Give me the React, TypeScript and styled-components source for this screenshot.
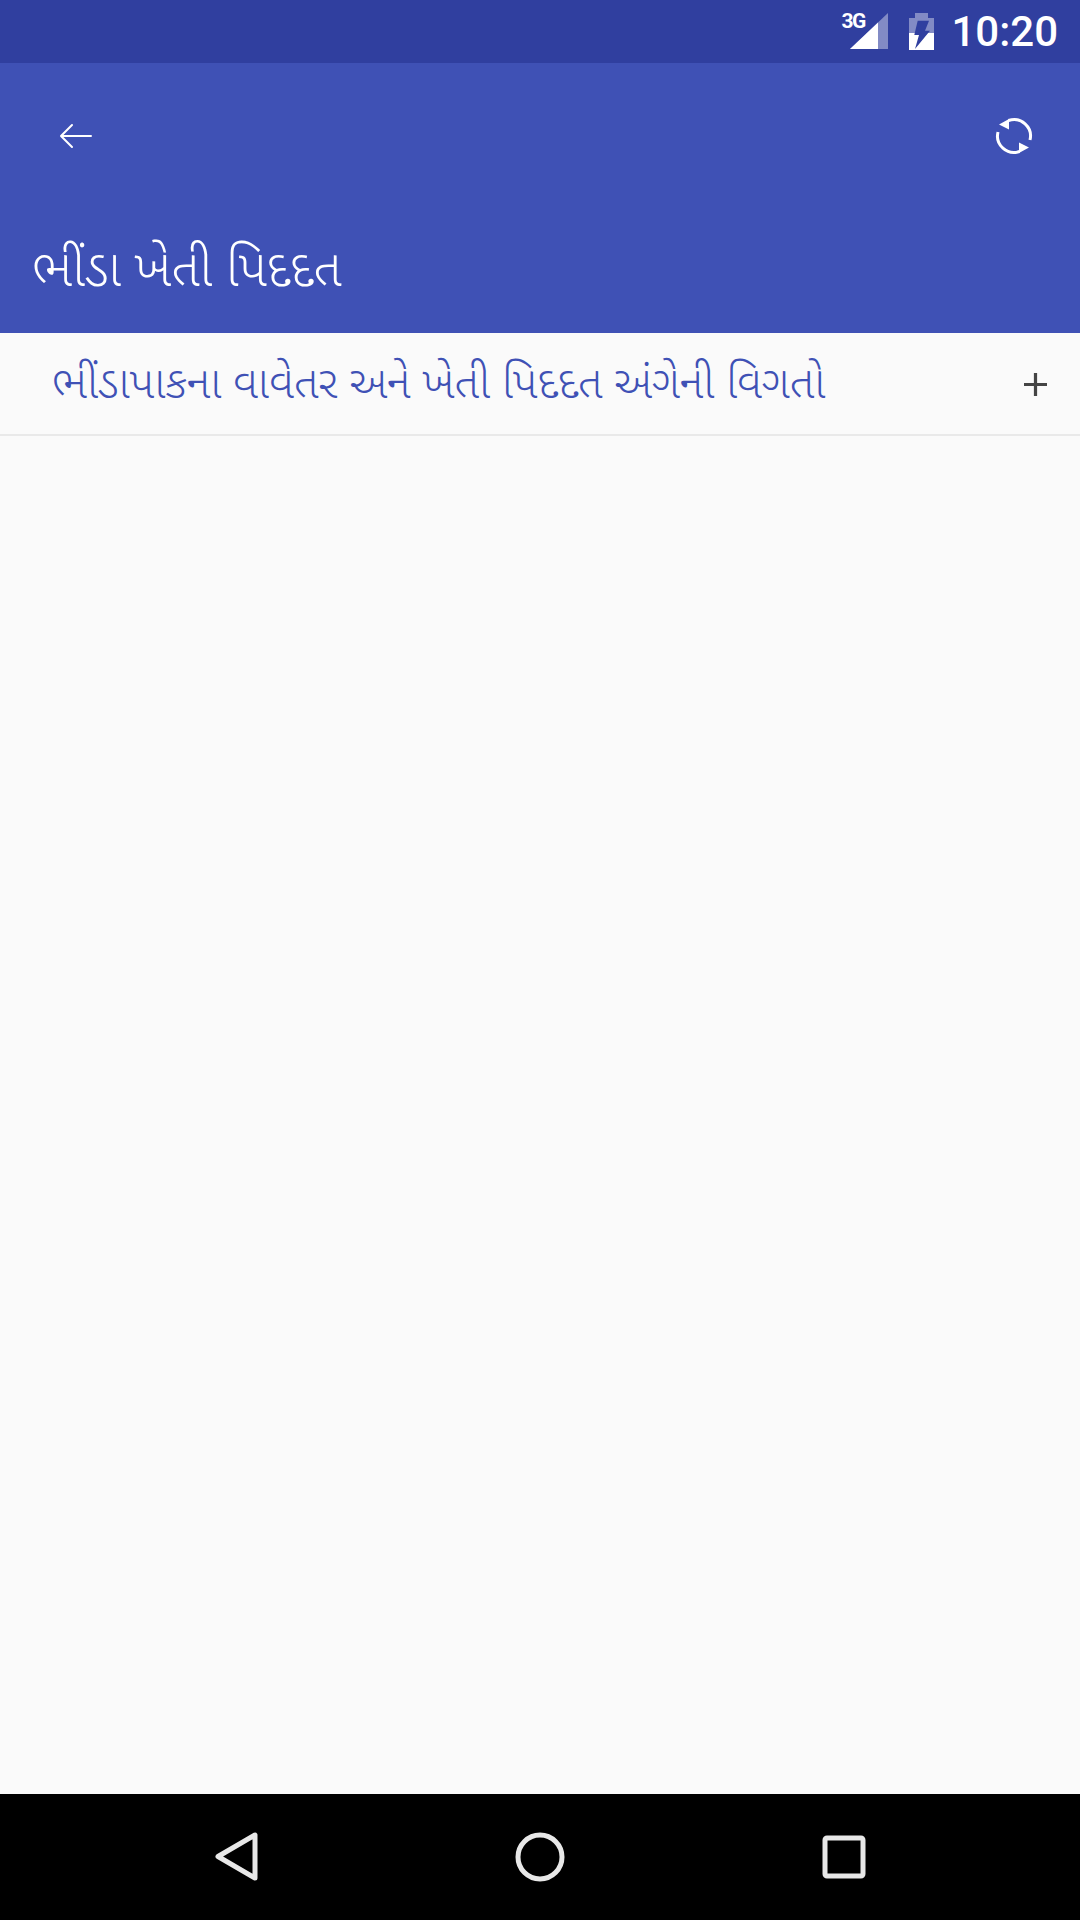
import React from 'react';
import styled, { createGlobalStyle } from 'styled-components';

const GlobalStyle = createGlobalStyle`
  html, body {
    margin: 0;
    padding: 0;
    background: #fafafa;
  }
  #root {
    height: 1920px;
  }
`;

const Screen = styled.div`
  width: 1080px;
  height: 1920px;
  display: flex;
  flex-direction: column;
  font-family: "Noto Sans Gujarati", "Noto Sans", "Roboto", sans-serif;
  background: #fafafa;
`;

const StatusBar = styled.div`
  height: 63px;
  flex: none;
  background: #303f9f;
  display: flex;
  align-items: center;
  justify-content: flex-end;
  padding-right: 22px;
`;

const StatusTime = styled.span`
  font-family: Roboto, sans-serif;
  font-weight: 500;
  font-size: 42px;
  line-height: 63px;
  color: #fff;
  margin-left: 17px;
`;

const SignalWrap = styled.div`
  position: relative;
  width: 46px;
  height: 63px;
  margin-right: 21px;
`;

const NetworkLabel = styled.span`
  position: absolute;
  left: -1px;
  top: 9px;
  font-family: Roboto, sans-serif;
  font-weight: 700;
  font-size: 21px;
  line-height: 24px;
  letter-spacing: -1.5px;
  color: #fff;
`;

const SignalIcon = styled.svg`
  position: absolute;
  left: 8px;
  top: 13px;
  width: 38px;
  height: 36px;
`;

const BatteryIcon = styled.svg`
  width: 25px;
  height: 37px;
  flex: none;
`;

const Toolbar = styled.header`
  height: 270px;
  flex: none;
  background: #3f51b5;
  display: flex;
  flex-direction: column;
  color: #fff;
`;

const ToolbarRow = styled.div`
  display: flex;
  align-items: center;
  justify-content: space-between;
  padding: 48px 41px 0 57px;
`;

const BackIcon = styled.svg`
  width: 36px;
  height: 28px;
  fill: none;
  stroke: #fff;
  stroke-width: 2;
  stroke-linecap: round;
  stroke-linejoin: round;
`;

const SyncIcon = styled.svg`
  width: 50px;
  height: 50px;
`;

const Title = styled.h1`
  margin: 82px 0 0 32px;
  font-size: 51px;
  font-weight: 300;
  line-height: 62px;
  color: #fff;
`;

const ListRow = styled.div`
  height: 101px;
  flex: none;
  display: flex;
  align-items: center;
  justify-content: space-between;
  padding: 0 33px 0 52px;
  border-bottom: 2px solid #e9e9e9;
`;

const RowLabel = styled.span`
  margin-top: 6px;
  font-size: 44.4px;
  font-weight: 300;
  line-height: 60px;
  color: #3f51b5;
`;

const PlusIcon = styled.svg`
  width: 23px;
  height: 23px;
  margin-top: 2px;
  stroke: #444;
  stroke-width: 3.5;
`;

const Content = styled.main`
  flex: 1;
  background: #fafafa;
`;

const NavBar = styled.nav`
  height: 126px;
  flex: none;
  background: #000;
  display: flex;
  align-items: center;
  justify-content: center;
  gap: 244px;
`;

const NavIcon = styled.svg`
  width: 60px;
  height: 60px;
  fill: none;
  stroke: #e8e8e8;
  stroke-width: 5;
  stroke-linejoin: round;
`;

export default function App() {
  return (
    <Screen>
      <GlobalStyle />
      <StatusBar>
        <SignalWrap>
          <NetworkLabel>3G</NetworkLabel>
          <SignalIcon viewBox="0 0 38 36">
            <path d="M0 36 L38 0 V36 Z" fill="#fff" fillOpacity="0.4" />
            <path d="M0 36 L28 9.5 V36 Z" fill="#fff" />
          </SignalIcon>
        </SignalWrap>
        <BatteryIcon viewBox="0 0 25 37">
          <path d="M6 0 H19 V5 H25 V20 H0 V5 H6 Z" fill="#fff" fillOpacity="0.4" />
          <path d="M0 20 H25 V37 H0 Z" fill="#fff" />
          <path d="M8.7 7.7 H20 L16 17.7 H21 L6 36 L10 22 H5.3 Z" fill="#303f9f" />
        </BatteryIcon>
        <StatusTime>10:20</StatusTime>
      </StatusBar>
      <Toolbar>
        <ToolbarRow>
          <BackIcon viewBox="0 0 36 28">
            <path d="M34 14 H4 M15 3 L4 14 L15 25" />
          </BackIcon>
          <SyncIcon viewBox="0 0 50 50">
            <path d="M19.5 9.5 A16.5 16.5 0 0 1 41 29 M9 21 A16.5 16.5 0 0 0 30.5 40.5" fill="none" stroke="#fff" strokeWidth="3" />
            <path d="M10 13.5 L20 8 V18.5 Z M40 36.5 L30 42 V31.5 Z" fill="#fff" />
          </SyncIcon>
        </ToolbarRow>
        <Title>ભીંડા ખેતી પિદદત</Title>
      </Toolbar>
      <ListRow>
        <RowLabel>ભીંડાપાકના વાવેતર અને ખેતી પિદદત અંગેની વિગતો</RowLabel>
        <PlusIcon viewBox="0 0 25 25">
          <path d="M12.5 0 V25 M0 12.5 H25" />
        </PlusIcon>
      </ListRow>
      <Content />
      <NavBar>
        <NavIcon viewBox="0 0 60 60">
          <path d="M49 8 V51 L12 29.5 Z" />
        </NavIcon>
        <NavIcon viewBox="0 0 60 60">
          <circle cx="30" cy="30" r="22" />
        </NavIcon>
        <NavIcon viewBox="0 0 60 60">
          <rect x="11" y="11" width="38" height="38" rx="2" />
        </NavIcon>
      </NavBar>
    </Screen>
  );
}
